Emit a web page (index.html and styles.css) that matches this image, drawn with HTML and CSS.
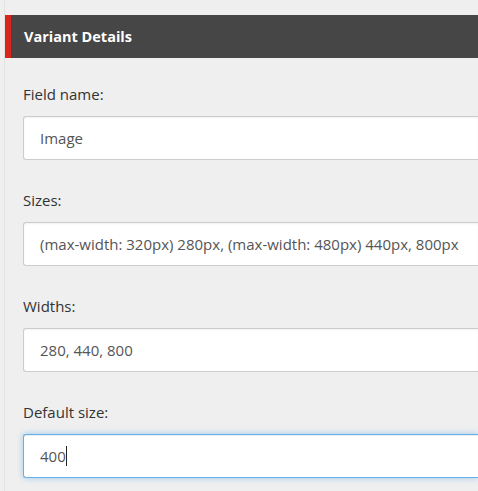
FILE: index.html
```html
<!DOCTYPE html>
<html>
<head>
<meta charset="utf-8">
<link rel="stylesheet" href="styles.css">
</head>
<body>
<div class="panel">
  <div class="panel-header">Variant Details</div>
  <div class="panel-body">
    <div class="field">
      <div class="label">Field name:</div>
      <div class="input">Image</div>
    </div>
    <div class="field">
      <div class="label">Sizes:</div>
      <div class="input">(max-width: 320px) 280px, (max-width: 480px) 440px, 800px</div>
    </div>
    <div class="field">
      <div class="label">Widths:</div>
      <div class="input">280, 440, 800</div>
    </div>
    <div class="field">
      <div class="label">Default size:</div>
      <div class="input focus">400<span class="caret"></span></div>
    </div>
  </div>
</div>
</body>
</html>
```
FILE: styles.css
```css
html, body {
  margin: 0;
  padding: 0;
  background: #efefef;
  overflow: hidden;
  height: 100%;
}
body {
  font-family: "Open Sans", "Noto Sans", sans-serif;
  color: #333;
}
.panel {
  margin-left: 4px;
  border-left: 1px solid #e2e2e2;
  padding-top: 15px;
  min-height: 100%;
  box-sizing: border-box;
}
.panel-header {
  height: 43px;
  background: #464646;
  border-left: 6px solid #d9261c;
  color: #fff;
  font-weight: 700;
  font-size: 14.5px;
  line-height: 43px;
  padding-left: 13px;
}
.panel-body {
  padding-left: 18px;
  padding-top: 26px;
}
.field {
  margin-bottom: 30px;
}
.label {
  font-size: 15px;
  line-height: 20px;
  color: #333;
  margin-bottom: 12px;
}
.input {
  height: 42px;
  border: 1px solid #ccc;
  border-right: 0;
  border-radius: 3px 0 0 3px;
  background: #fff;
  box-shadow: inset 0 1px 2px rgba(0,0,0,0.06);
  font-size: 15px;
  line-height: 42px;
  padding-left: 16px;
  color: #555;
  white-space: nowrap;
  overflow: hidden;
}
.input.focus {
  border-color: #66afe9;
  box-shadow: inset 0 1px 1px rgba(0,0,0,0.075), 0 0 6px rgba(102,175,233,0.6);
}
.caret {
  display: inline-block;
  width: 1px;
  height: 20px;
  background: #222;
  vertical-align: middle;
  margin-top: -3px;
}
```
